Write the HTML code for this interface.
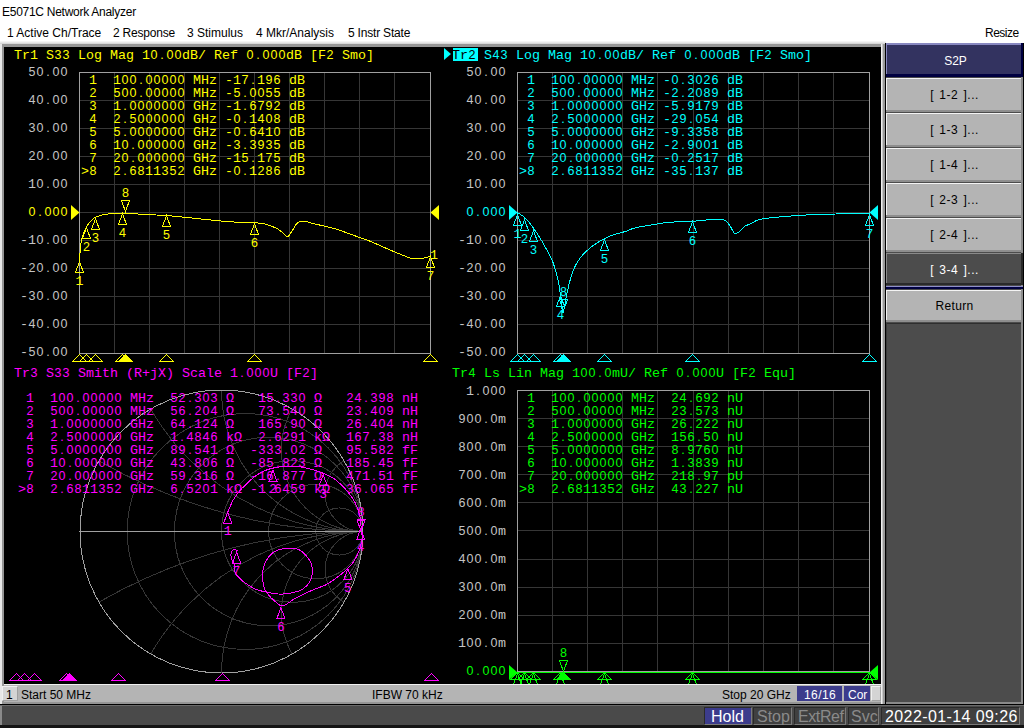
<!DOCTYPE html><html><head><meta charset="utf-8"><style>
*{margin:0;padding:0;box-sizing:border-box}
html,body{width:1024px;height:728px;overflow:hidden;background:#fff}
.m{position:absolute;font-family:"Liberation Mono",monospace;font-size:13.333px;line-height:13px;white-space:pre}
.m i{display:inline-block;width:8px;text-align:center;font-style:normal;font-family:"Liberation Sans",sans-serif;font-size:12.5px}
.s{position:absolute;font-family:"Liberation Sans",sans-serif;line-height:14px;white-space:pre}
.a{position:absolute}
</style></head><body>
<div class="s" style="left:2px;top:5px;color:#000;font-size:12px;letter-spacing:-0.27px">E5071C Network Analyzer</div>
<div class="s" style="left:7px;top:26px;color:#000;font-size:12px;letter-spacing:0px">1 Active Ch/Trace</div>
<div class="s" style="left:113px;top:26px;color:#000;font-size:12px;letter-spacing:-0.2px">2 Response</div>
<div class="s" style="left:187px;top:26px;color:#000;font-size:12px;letter-spacing:0px">3 Stimulus</div>
<div class="s" style="left:256px;top:26px;color:#000;font-size:12px;letter-spacing:0px">4 Mkr/Analysis</div>
<div class="s" style="left:348px;top:26px;color:#000;font-size:12px;letter-spacing:-0.2px">5 Instr State</div>
<div class="s" style="left:985px;top:26px;color:#000;font-size:12px;letter-spacing:-0.5px">Resize</div>
<div class="a" style="left:0;top:41px;width:886px;height:663px;background:#e8e8e8"></div>
<div class="a" style="left:0;top:41px;width:886px;height:1px;background:#f4f4f4"></div>
<div class="a" style="left:0;top:43px;width:886px;height:1px;background:#d8d8d8"></div>
<div class="a" style="left:2px;top:44px;width:884px;height:660px;background:#969696"></div>
<div class="a" style="left:4px;top:47px;width:877px;height:637px;background:#000"></div>
<div class="a" style="left:881px;top:44px;width:1px;height:660px;background:#f0f0f0"></div>
<div class="a" style="left:882px;top:44px;width:1px;height:660px;background:#c8c8c8"></div>
<div class="a" style="left:883px;top:44px;width:2px;height:660px;background:#9a9a9a"></div>
<svg class="a" style="left:0;top:0" width="1024" height="728" viewBox="0 0 1024 728"><defs><clipPath id="cl"><rect x="4" y="47" width="877" height="637"/></clipPath></defs><g clip-path="url(#cl)"><line x1="114.5" y1="72" x2="114.5" y2="353" stroke="#363636" shape-rendering="crispEdges"/><line x1="149.5" y1="72" x2="149.5" y2="353" stroke="#363636" shape-rendering="crispEdges"/><line x1="184.5" y1="72" x2="184.5" y2="353" stroke="#363636" shape-rendering="crispEdges"/><line x1="219.5" y1="72" x2="219.5" y2="353" stroke="#363636" shape-rendering="crispEdges"/><line x1="254.5" y1="72" x2="254.5" y2="353" stroke="#363636" shape-rendering="crispEdges"/><line x1="289.5" y1="72" x2="289.5" y2="353" stroke="#363636" shape-rendering="crispEdges"/><line x1="324.5" y1="72" x2="324.5" y2="353" stroke="#363636" shape-rendering="crispEdges"/><line x1="359.5" y1="72" x2="359.5" y2="353" stroke="#363636" shape-rendering="crispEdges"/><line x1="394.5" y1="72" x2="394.5" y2="353" stroke="#363636" shape-rendering="crispEdges"/><line x1="79" y1="100.5" x2="430" y2="100.5" stroke="#363636" shape-rendering="crispEdges"/><line x1="79" y1="128.5" x2="430" y2="128.5" stroke="#363636" shape-rendering="crispEdges"/><line x1="79" y1="156.5" x2="430" y2="156.5" stroke="#363636" shape-rendering="crispEdges"/><line x1="79" y1="184.5" x2="430" y2="184.5" stroke="#363636" shape-rendering="crispEdges"/><line x1="79" y1="212.5" x2="430" y2="212.5" stroke="#363636" shape-rendering="crispEdges"/><line x1="79" y1="240.5" x2="430" y2="240.5" stroke="#363636" shape-rendering="crispEdges"/><line x1="79" y1="268.5" x2="430" y2="268.5" stroke="#363636" shape-rendering="crispEdges"/><line x1="79" y1="296.5" x2="430" y2="296.5" stroke="#363636" shape-rendering="crispEdges"/><line x1="79" y1="324.5" x2="430" y2="324.5" stroke="#363636" shape-rendering="crispEdges"/><rect x="79.5" y="72.5" width="351" height="281" fill="none" stroke="#a0a0a0" shape-rendering="crispEdges"/><line x1="552.5" y1="72" x2="552.5" y2="353" stroke="#363636" shape-rendering="crispEdges"/><line x1="587.5" y1="72" x2="587.5" y2="353" stroke="#363636" shape-rendering="crispEdges"/><line x1="622.5" y1="72" x2="622.5" y2="353" stroke="#363636" shape-rendering="crispEdges"/><line x1="657.5" y1="72" x2="657.5" y2="353" stroke="#363636" shape-rendering="crispEdges"/><line x1="693.5" y1="72" x2="693.5" y2="353" stroke="#363636" shape-rendering="crispEdges"/><line x1="728.5" y1="72" x2="728.5" y2="353" stroke="#363636" shape-rendering="crispEdges"/><line x1="763.5" y1="72" x2="763.5" y2="353" stroke="#363636" shape-rendering="crispEdges"/><line x1="798.5" y1="72" x2="798.5" y2="353" stroke="#363636" shape-rendering="crispEdges"/><line x1="833.5" y1="72" x2="833.5" y2="353" stroke="#363636" shape-rendering="crispEdges"/><line x1="517" y1="100.5" x2="869" y2="100.5" stroke="#363636" shape-rendering="crispEdges"/><line x1="517" y1="128.5" x2="869" y2="128.5" stroke="#363636" shape-rendering="crispEdges"/><line x1="517" y1="156.5" x2="869" y2="156.5" stroke="#363636" shape-rendering="crispEdges"/><line x1="517" y1="184.5" x2="869" y2="184.5" stroke="#363636" shape-rendering="crispEdges"/><line x1="517" y1="212.5" x2="869" y2="212.5" stroke="#363636" shape-rendering="crispEdges"/><line x1="517" y1="240.5" x2="869" y2="240.5" stroke="#363636" shape-rendering="crispEdges"/><line x1="517" y1="268.5" x2="869" y2="268.5" stroke="#363636" shape-rendering="crispEdges"/><line x1="517" y1="296.5" x2="869" y2="296.5" stroke="#363636" shape-rendering="crispEdges"/><line x1="517" y1="324.5" x2="869" y2="324.5" stroke="#363636" shape-rendering="crispEdges"/><rect x="517.5" y="72.5" width="352" height="281" fill="none" stroke="#a0a0a0" shape-rendering="crispEdges"/><line x1="552.5" y1="390" x2="552.5" y2="671" stroke="#363636" shape-rendering="crispEdges"/><line x1="587.5" y1="390" x2="587.5" y2="671" stroke="#363636" shape-rendering="crispEdges"/><line x1="622.5" y1="390" x2="622.5" y2="671" stroke="#363636" shape-rendering="crispEdges"/><line x1="657.5" y1="390" x2="657.5" y2="671" stroke="#363636" shape-rendering="crispEdges"/><line x1="693.5" y1="390" x2="693.5" y2="671" stroke="#363636" shape-rendering="crispEdges"/><line x1="728.5" y1="390" x2="728.5" y2="671" stroke="#363636" shape-rendering="crispEdges"/><line x1="763.5" y1="390" x2="763.5" y2="671" stroke="#363636" shape-rendering="crispEdges"/><line x1="798.5" y1="390" x2="798.5" y2="671" stroke="#363636" shape-rendering="crispEdges"/><line x1="833.5" y1="390" x2="833.5" y2="671" stroke="#363636" shape-rendering="crispEdges"/><line x1="517" y1="418.5" x2="869" y2="418.5" stroke="#363636" shape-rendering="crispEdges"/><line x1="517" y1="446.5" x2="869" y2="446.5" stroke="#363636" shape-rendering="crispEdges"/><line x1="517" y1="474.5" x2="869" y2="474.5" stroke="#363636" shape-rendering="crispEdges"/><line x1="517" y1="502.5" x2="869" y2="502.5" stroke="#363636" shape-rendering="crispEdges"/><line x1="517" y1="530.5" x2="869" y2="530.5" stroke="#363636" shape-rendering="crispEdges"/><line x1="517" y1="559.5" x2="869" y2="559.5" stroke="#363636" shape-rendering="crispEdges"/><line x1="517" y1="587.5" x2="869" y2="587.5" stroke="#363636" shape-rendering="crispEdges"/><line x1="517" y1="615.5" x2="869" y2="615.5" stroke="#363636" shape-rendering="crispEdges"/><line x1="517" y1="643.5" x2="869" y2="643.5" stroke="#363636" shape-rendering="crispEdges"/><rect x="517.5" y="390.5" width="352" height="281" fill="none" stroke="#a0a0a0" shape-rendering="crispEdges"/><path d="M79.50,262.00 C79.67,259.50 80.07,251.10 80.50,247.00 C80.93,242.90 81.18,240.57 82.10,237.40 C83.02,234.23 84.62,230.67 86.00,228.00 C87.38,225.33 88.75,223.23 90.40,221.40 C92.05,219.57 93.33,218.18 95.90,217.00 C98.47,215.82 101.95,214.90 105.80,214.30 C109.65,213.70 114.13,213.55 119.00,213.40 C123.87,213.25 131.55,213.27 135.00,213.40 C138.45,213.53 135.17,213.88 139.70,214.20 C144.23,214.52 156.30,214.95 162.20,215.30 C168.10,215.65 169.73,215.80 175.10,216.30 C180.47,216.80 188.32,217.67 194.40,218.30 C200.48,218.93 204.62,219.45 211.60,220.10 C218.58,220.75 229.13,221.77 236.30,222.20 C243.47,222.63 250.44,222.50 254.60,222.70 C258.76,222.90 259.17,223.08 261.25,223.40 C263.33,223.72 264.49,223.75 267.10,224.60 C269.71,225.45 274.45,227.27 276.90,228.50 C279.35,229.73 280.10,230.65 281.80,232.00 C283.50,233.35 285.65,236.37 287.10,236.60 C288.55,236.83 288.95,235.50 290.50,233.40 C292.05,231.30 294.77,226.02 296.40,224.00 C298.03,221.98 298.67,221.70 300.30,221.30 C301.93,220.90 304.08,221.23 306.20,221.60 C308.32,221.97 310.07,222.77 313.00,223.50 C315.93,224.23 319.65,224.98 323.75,226.00 C327.85,227.02 331.59,227.67 337.60,229.60 C343.61,231.53 354.53,235.72 359.80,237.60 C365.07,239.48 363.72,238.65 369.20,240.90 C374.68,243.15 385.67,248.20 392.70,251.10 C399.73,254.00 406.52,257.10 411.40,258.30 C416.28,259.50 418.87,258.60 422.00,258.30 C425.13,258.00 428.83,256.80 430.20,256.50" fill="none" stroke="#ffff00" stroke-width="1" shape-rendering="crispEdges"/><path d="M517.50,212.50 C518.98,213.60 523.13,215.62 526.40,219.10 C529.67,222.58 533.82,228.48 537.10,233.40 C540.38,238.32 543.42,243.68 546.10,248.60 C548.78,253.52 551.12,257.25 553.20,262.90 C555.28,268.55 557.26,275.98 558.60,282.50 C559.94,289.02 560.52,296.93 561.25,302.00 C561.98,307.07 562.11,314.07 563.00,312.90 C563.89,311.73 565.27,300.98 566.60,295.00 C567.93,289.02 569.37,282.21 571.00,277.00 C572.63,271.79 574.00,267.90 576.40,263.75 C578.80,259.60 581.82,255.67 585.40,252.10 C588.98,248.53 593.45,245.12 597.90,242.30 C602.35,239.48 607.58,236.98 612.10,235.20 C616.62,233.42 621.15,232.82 625.00,231.60 C628.85,230.38 629.68,229.20 635.20,227.90 C640.72,226.60 652.17,224.75 658.10,223.80 C664.03,222.85 665.08,222.62 670.80,222.20 C676.52,221.78 685.42,221.77 692.40,221.30 C699.38,220.83 707.83,219.72 712.70,219.40 C717.57,219.08 719.28,219.05 721.60,219.40 C723.92,219.75 725.13,220.32 726.60,221.50 C728.07,222.68 729.12,224.55 730.40,226.50 C731.68,228.45 733.02,232.18 734.30,233.20 C735.58,234.22 736.42,233.72 738.10,232.60 C739.78,231.48 742.42,227.92 744.40,226.50 C746.38,225.08 747.03,225.35 750.00,224.10 C752.97,222.85 753.40,220.48 762.20,219.00 C771.00,217.52 790.53,216.03 802.80,215.20 C815.07,214.37 824.78,214.32 835.80,214.00 C846.82,213.68 863.38,213.42 868.90,213.30" fill="none" stroke="#00ffff" stroke-width="1" shape-rendering="crispEdges"/><path d="M79.5,261.5 L75.5,272.5 L83.5,272.5 Z" fill="none" stroke="#ffff00" stroke-width="1" shape-rendering="crispEdges"/><rect x="75.0" y="272.0" width="9" height="1" fill="#ffff00" shape-rendering="crispEdges"/><path d="M86.5,227.5 L82.5,238.5 L90.5,238.5 Z" fill="none" stroke="#ffff00" stroke-width="1" shape-rendering="crispEdges"/><rect x="82.0" y="238.0" width="9" height="1" fill="#ffff00" shape-rendering="crispEdges"/><path d="M95.5,218.5 L91.5,229.5 L99.5,229.5 Z" fill="none" stroke="#ffff00" stroke-width="1" shape-rendering="crispEdges"/><rect x="91.0" y="229.0" width="9" height="1" fill="#ffff00" shape-rendering="crispEdges"/><path d="M122.5,213.5 L118.5,224.5 L126.5,224.5 Z" fill="none" stroke="#ffff00" stroke-width="1" shape-rendering="crispEdges"/><rect x="118.0" y="224.0" width="9" height="1" fill="#ffff00" shape-rendering="crispEdges"/><path d="M166.5,215.5 L162.5,226.5 L170.5,226.5 Z" fill="none" stroke="#ffff00" stroke-width="1" shape-rendering="crispEdges"/><rect x="162.0" y="226.0" width="9" height="1" fill="#ffff00" shape-rendering="crispEdges"/><path d="M254.5,223.5 L250.5,234.5 L258.5,234.5 Z" fill="none" stroke="#ffff00" stroke-width="1" shape-rendering="crispEdges"/><rect x="250.0" y="234.0" width="9" height="1" fill="#ffff00" shape-rendering="crispEdges"/><path d="M430.5,256.5 L426.5,267.5 L434.5,267.5 Z" fill="none" stroke="#ffff00" stroke-width="1" shape-rendering="crispEdges"/><rect x="426.0" y="267.0" width="9" height="1" fill="#ffff00" shape-rendering="crispEdges"/><path d="M125.5,211.5 L121.5,200.5 L129.5,200.5 Z" fill="none" stroke="#ffff00" stroke-width="1" shape-rendering="crispEdges"/><rect x="121.0" y="199.5" width="9" height="1" fill="#ffff00" shape-rendering="crispEdges"/><path d="M517.5,214.5 L513.5,225.5 L521.5,225.5 Z" fill="none" stroke="#00ffff" stroke-width="1" shape-rendering="crispEdges"/><rect x="513.0" y="225.0" width="9" height="1" fill="#00ffff" shape-rendering="crispEdges"/><path d="M524.5,219.5 L520.5,230.5 L528.5,230.5 Z" fill="none" stroke="#00ffff" stroke-width="1" shape-rendering="crispEdges"/><rect x="520.0" y="230.0" width="9" height="1" fill="#00ffff" shape-rendering="crispEdges"/><path d="M533.5,230.5 L529.5,241.5 L537.5,241.5 Z" fill="none" stroke="#00ffff" stroke-width="1" shape-rendering="crispEdges"/><rect x="529.0" y="241.0" width="9" height="1" fill="#00ffff" shape-rendering="crispEdges"/><path d="M560.5,295.5 L556.5,306.5 L564.5,306.5 Z" fill="none" stroke="#00ffff" stroke-width="1" shape-rendering="crispEdges"/><rect x="556.0" y="306.0" width="9" height="1" fill="#00ffff" shape-rendering="crispEdges"/><path d="M604.5,239.5 L600.5,250.5 L608.5,250.5 Z" fill="none" stroke="#00ffff" stroke-width="1" shape-rendering="crispEdges"/><rect x="600.0" y="250.0" width="9" height="1" fill="#00ffff" shape-rendering="crispEdges"/><path d="M692.5,221.5 L688.5,232.5 L696.5,232.5 Z" fill="none" stroke="#00ffff" stroke-width="1" shape-rendering="crispEdges"/><rect x="688.0" y="232.0" width="9" height="1" fill="#00ffff" shape-rendering="crispEdges"/><path d="M869.5,214.5 L865.5,225.5 L873.5,225.5 Z" fill="none" stroke="#00ffff" stroke-width="1" shape-rendering="crispEdges"/><rect x="865.0" y="225.0" width="9" height="1" fill="#00ffff" shape-rendering="crispEdges"/><path d="M563.5,310.5 L559.5,299.5 L567.5,299.5 Z" fill="none" stroke="#00ffff" stroke-width="1" shape-rendering="crispEdges"/><rect x="559.0" y="298.5" width="9" height="1" fill="#00ffff" shape-rendering="crispEdges"/><path d="M79.5,354.5 L72.5,361.5 L86.5,361.5 Z" fill="none" stroke="#ffff00" stroke-width="1" shape-rendering="crispEdges"/><path d="M86.5,354.5 L79.5,361.5 L93.5,361.5 Z" fill="none" stroke="#ffff00" stroke-width="1" shape-rendering="crispEdges"/><path d="M95.5,354.5 L88.5,361.5 L102.5,361.5 Z" fill="none" stroke="#ffff00" stroke-width="1" shape-rendering="crispEdges"/><path d="M122.5,354.5 L115.5,361.5 L129.5,361.5 Z" fill="none" stroke="#ffff00" stroke-width="1" shape-rendering="crispEdges"/><path d="M166.5,354.5 L159.5,361.5 L173.5,361.5 Z" fill="none" stroke="#ffff00" stroke-width="1" shape-rendering="crispEdges"/><path d="M254.5,354.5 L247.5,361.5 L261.5,361.5 Z" fill="none" stroke="#ffff00" stroke-width="1" shape-rendering="crispEdges"/><path d="M430.5,354.5 L423.5,361.5 L437.5,361.5 Z" fill="none" stroke="#ffff00" stroke-width="1" shape-rendering="crispEdges"/><path d="M125.5,354.5 L118.5,361.5 L132.5,361.5 Z" fill="#ffff00" stroke="#ffff00" stroke-width="1" shape-rendering="crispEdges"/><path d="M517.5,354.5 L510.5,361.5 L524.5,361.5 Z" fill="none" stroke="#00ffff" stroke-width="1" shape-rendering="crispEdges"/><path d="M524.5,354.5 L517.5,361.5 L531.5,361.5 Z" fill="none" stroke="#00ffff" stroke-width="1" shape-rendering="crispEdges"/><path d="M533.5,354.5 L526.5,361.5 L540.5,361.5 Z" fill="none" stroke="#00ffff" stroke-width="1" shape-rendering="crispEdges"/><path d="M560.5,354.5 L553.5,361.5 L567.5,361.5 Z" fill="none" stroke="#00ffff" stroke-width="1" shape-rendering="crispEdges"/><path d="M604.5,354.5 L597.5,361.5 L611.5,361.5 Z" fill="none" stroke="#00ffff" stroke-width="1" shape-rendering="crispEdges"/><path d="M692.5,354.5 L685.5,361.5 L699.5,361.5 Z" fill="none" stroke="#00ffff" stroke-width="1" shape-rendering="crispEdges"/><path d="M869.5,354.5 L862.5,361.5 L876.5,361.5 Z" fill="none" stroke="#00ffff" stroke-width="1" shape-rendering="crispEdges"/><path d="M563.5,354.5 L556.5,361.5 L570.5,361.5 Z" fill="#00ffff" stroke="#00ffff" stroke-width="1" shape-rendering="crispEdges"/><path d="M16.5,673.5 L9.5,680.5 L23.5,680.5 Z" fill="none" stroke="#ff00ff" stroke-width="1" shape-rendering="crispEdges"/><path d="M24.5,673.5 L17.5,680.5 L31.5,680.5 Z" fill="none" stroke="#ff00ff" stroke-width="1" shape-rendering="crispEdges"/><path d="M34.5,673.5 L27.5,680.5 L41.5,680.5 Z" fill="none" stroke="#ff00ff" stroke-width="1" shape-rendering="crispEdges"/><path d="M66.5,673.5 L59.5,680.5 L73.5,680.5 Z" fill="none" stroke="#ff00ff" stroke-width="1" shape-rendering="crispEdges"/><path d="M118.5,673.5 L111.5,680.5 L125.5,680.5 Z" fill="none" stroke="#ff00ff" stroke-width="1" shape-rendering="crispEdges"/><path d="M222.5,673.5 L215.5,680.5 L229.5,680.5 Z" fill="none" stroke="#ff00ff" stroke-width="1" shape-rendering="crispEdges"/><path d="M431.5,673.5 L424.5,680.5 L438.5,680.5 Z" fill="none" stroke="#ff00ff" stroke-width="1" shape-rendering="crispEdges"/><path d="M69.5,673.5 L62.5,680.5 L76.5,680.5 Z" fill="#ff00ff" stroke="#ff00ff" stroke-width="1" shape-rendering="crispEdges"/><path d="M517.5,672.5 L510.5,679.5 L524.5,679.5 Z" fill="none" stroke="#00ff00" stroke-width="1" shape-rendering="crispEdges"/><path d="M524.5,672.5 L517.5,679.5 L531.5,679.5 Z" fill="none" stroke="#00ff00" stroke-width="1" shape-rendering="crispEdges"/><path d="M533.5,672.5 L526.5,679.5 L540.5,679.5 Z" fill="none" stroke="#00ff00" stroke-width="1" shape-rendering="crispEdges"/><path d="M560.5,672.5 L553.5,679.5 L567.5,679.5 Z" fill="none" stroke="#00ff00" stroke-width="1" shape-rendering="crispEdges"/><path d="M604.5,672.5 L597.5,679.5 L611.5,679.5 Z" fill="none" stroke="#00ff00" stroke-width="1" shape-rendering="crispEdges"/><path d="M692.5,672.5 L685.5,679.5 L699.5,679.5 Z" fill="none" stroke="#00ff00" stroke-width="1" shape-rendering="crispEdges"/><path d="M869.5,672.5 L862.5,679.5 L876.5,679.5 Z" fill="none" stroke="#00ff00" stroke-width="1" shape-rendering="crispEdges"/><path d="M563.5,672.5 L556.5,679.5 L570.5,679.5 Z" fill="#00ff00" stroke="#00ff00" stroke-width="1" shape-rendering="crispEdges"/><path d="M79.5,212.5 L71.0,205.0 L71.0,220.0 Z" fill="#ffff00"/><path d="M430.5,212.5 L439.0,205.0 L439.0,220.0 Z" fill="#ffff00"/><path d="M517.5,212.5 L509.0,205.0 L509.0,220.0 Z" fill="#00ffff"/><path d="M869.5,212.5 L878.0,205.0 L878.0,220.0 Z" fill="#00ffff"/><path d="M517.5,672.5 L509.0,665.0 L509.0,680.0 Z" fill="#00ff00"/><path d="M869.5,672.5 L878.0,665.0 L878.0,680.0 Z" fill="#00ff00"/><line x1="517" y1="672.5" x2="869" y2="672.5" stroke="#00ff00" stroke-width="1" shape-rendering="crispEdges"/><path d="M517.5,673.5 L513.5,684.5 L521.5,684.5 Z" fill="none" stroke="#00ff00" stroke-width="1" shape-rendering="crispEdges"/><rect x="513.0" y="684.0" width="9" height="1" fill="#00ff00" shape-rendering="crispEdges"/><path d="M524.5,673.5 L520.5,684.5 L528.5,684.5 Z" fill="none" stroke="#00ff00" stroke-width="1" shape-rendering="crispEdges"/><rect x="520.0" y="684.0" width="9" height="1" fill="#00ff00" shape-rendering="crispEdges"/><path d="M533.5,673.5 L529.5,684.5 L537.5,684.5 Z" fill="none" stroke="#00ff00" stroke-width="1" shape-rendering="crispEdges"/><rect x="529.0" y="684.0" width="9" height="1" fill="#00ff00" shape-rendering="crispEdges"/><path d="M560.5,673.5 L556.5,684.5 L564.5,684.5 Z" fill="none" stroke="#00ff00" stroke-width="1" shape-rendering="crispEdges"/><rect x="556.0" y="684.0" width="9" height="1" fill="#00ff00" shape-rendering="crispEdges"/><path d="M604.5,673.5 L600.5,684.5 L608.5,684.5 Z" fill="none" stroke="#00ff00" stroke-width="1" shape-rendering="crispEdges"/><rect x="600.0" y="684.0" width="9" height="1" fill="#00ff00" shape-rendering="crispEdges"/><path d="M692.5,673.5 L688.5,684.5 L696.5,684.5 Z" fill="none" stroke="#00ff00" stroke-width="1" shape-rendering="crispEdges"/><rect x="688.0" y="684.0" width="9" height="1" fill="#00ff00" shape-rendering="crispEdges"/><path d="M869.5,673.5 L865.5,684.5 L873.5,684.5 Z" fill="none" stroke="#00ff00" stroke-width="1" shape-rendering="crispEdges"/><rect x="865.0" y="684.0" width="9" height="1" fill="#00ff00" shape-rendering="crispEdges"/><path d="M563.5,671.5 L559.5,660.5 L567.5,660.5 Z" fill="none" stroke="#00ff00" stroke-width="1" shape-rendering="crispEdges"/><rect x="559.0" y="659.5" width="9" height="1" fill="#00ff00" shape-rendering="crispEdges"/><clipPath id="sc"><circle cx="221.5" cy="531.5" r="141.5"/></clipPath><g clip-path="url(#sc)" fill="none" stroke="#363636" stroke-width="1" shape-rendering="crispEdges"><circle cx="245.08" cy="531.5" r="117.92"/><circle cx="268.67" cy="531.5" r="94.33"/><circle cx="292.25" cy="531.5" r="70.75"/><circle cx="315.83" cy="531.5" r="47.17"/><circle cx="339.42" cy="531.5" r="23.58"/><circle cx="363.00" cy="3.41" r="528.09"/><circle cx="363.00" cy="1059.59" r="528.09"/><circle cx="363.00" cy="286.41" r="245.09"/><circle cx="363.00" cy="776.59" r="245.09"/><circle cx="363.00" cy="390.00" r="141.50"/><circle cx="363.00" cy="673.00" r="141.50"/><circle cx="363.00" cy="449.80" r="81.70"/><circle cx="363.00" cy="613.20" r="81.70"/><circle cx="363.00" cy="493.59" r="37.91"/><circle cx="363.00" cy="569.41" r="37.91"/></g><circle cx="221.5" cy="531.5" r="141.5" fill="none" stroke="#a0a0a0" shape-rendering="crispEdges"/><line x1="80.0" y1="531.5" x2="363.0" y2="531.5" stroke="#a0a0a0" shape-rendering="crispEdges"/><path d="M228.00,511.80 C228.87,509.83 230.87,503.92 233.20,500.00 C235.53,496.08 238.10,492.43 242.00,488.30 C245.90,484.17 252.22,478.37 256.60,475.20 C260.98,472.03 263.67,470.77 268.30,469.30 C272.93,467.83 278.78,466.77 284.40,466.40 C290.02,466.03 295.65,466.00 302.00,467.10 C308.35,468.20 316.63,470.68 322.50,473.00 C328.37,475.32 332.32,476.98 337.20,481.00 C342.08,485.02 348.13,491.73 351.80,497.10 C355.47,502.47 357.58,507.55 359.20,513.20 C360.82,518.85 361.03,526.70 361.50,531.00 C361.97,535.30 362.42,535.65 362.00,539.00 C361.58,542.35 360.50,547.18 359.00,551.10 C357.50,555.02 355.02,559.47 353.00,562.50 C350.98,565.53 349.93,566.53 346.90,569.30 C343.87,572.07 338.33,576.50 334.80,579.10 C331.27,581.70 329.40,583.07 325.70,584.90 C322.00,586.73 317.55,587.93 312.60,590.10 C307.65,592.27 300.98,595.27 296.00,597.90 C291.02,600.53 286.30,605.42 282.70,605.90 C279.10,606.38 276.80,602.68 274.40,600.80 C272.00,598.92 270.02,596.83 268.30,594.60 C266.58,592.37 265.05,591.00 264.10,587.40 C263.15,583.80 262.42,577.12 262.60,573.00 C262.78,568.88 263.40,566.13 265.20,562.70 C267.00,559.27 269.80,554.82 273.40,552.40 C277.00,549.98 282.50,548.63 286.80,548.20 C291.10,547.77 295.60,548.08 299.20,549.80 C302.80,551.52 306.22,555.50 308.40,558.50 C310.58,561.50 311.95,564.18 312.30,567.80 C312.65,571.42 312.18,576.60 310.50,580.20 C308.82,583.80 305.47,587.27 302.20,589.40 C298.93,591.53 294.67,592.22 290.90,593.00 C287.13,593.78 283.72,594.27 279.60,594.10 C275.48,593.93 270.15,592.78 266.20,592.00 C262.25,591.22 259.33,590.85 255.90,589.40 C252.47,587.95 248.35,585.18 245.60,583.30 C242.85,581.42 241.12,579.82 239.40,578.10 C237.68,576.38 236.12,575.07 235.30,573.00 C234.48,570.93 235.18,568.28 234.50,565.70 C233.82,563.12 231.67,559.90 231.20,557.50 C230.73,555.10 231.10,552.67 231.70,551.30 C232.30,549.93 233.85,549.38 234.80,549.30 C235.75,549.22 236.97,550.55 237.40,550.80" fill="none" stroke="#ff00ff" stroke-width="1" shape-rendering="crispEdges"/><path d="M227.7,512.2 L223.7,523.2 L231.7,523.2 Z" fill="none" stroke="#ff00ff" stroke-width="1" shape-rendering="crispEdges"/><rect x="223.2" y="522.7" width="9" height="1" fill="#ff00ff" shape-rendering="crispEdges"/><path d="M272.9,470.1 L268.9,481.1 L276.9,481.1 Z" fill="none" stroke="#ff00ff" stroke-width="1" shape-rendering="crispEdges"/><rect x="268.4" y="480.6" width="9" height="1" fill="#ff00ff" shape-rendering="crispEdges"/><path d="M323.2,474.6 L319.2,485.6 L327.2,485.6 Z" fill="none" stroke="#ff00ff" stroke-width="1" shape-rendering="crispEdges"/><rect x="318.7" y="485.1" width="9" height="1" fill="#ff00ff" shape-rendering="crispEdges"/><path d="M360.7,528.5 L356.7,539.5 L364.7,539.5 Z" fill="none" stroke="#ff00ff" stroke-width="1" shape-rendering="crispEdges"/><rect x="356.2" y="539.0" width="9" height="1" fill="#ff00ff" shape-rendering="crispEdges"/><path d="M347.9,568.6 L343.9,579.6 L351.9,579.6 Z" fill="none" stroke="#ff00ff" stroke-width="1" shape-rendering="crispEdges"/><rect x="343.4" y="579.1" width="9" height="1" fill="#ff00ff" shape-rendering="crispEdges"/><path d="M280.9,607.6 L276.9,618.6 L284.9,618.6 Z" fill="none" stroke="#ff00ff" stroke-width="1" shape-rendering="crispEdges"/><rect x="276.4" y="618.1" width="9" height="1" fill="#ff00ff" shape-rendering="crispEdges"/><path d="M236.6,552.0 L232.6,563.0 L240.6,563.0 Z" fill="none" stroke="#ff00ff" stroke-width="1" shape-rendering="crispEdges"/><rect x="232.1" y="562.5" width="9" height="1" fill="#ff00ff" shape-rendering="crispEdges"/><path d="M361.0,531.0 L357.0,520.0 L365.0,520.0 Z" fill="none" stroke="#ff00ff" stroke-width="1" shape-rendering="crispEdges"/><rect x="356.5" y="519.0" width="9" height="1" fill="#ff00ff" shape-rendering="crispEdges"/></g></svg>
<div class="m" style="left:75.5px;top:274.5px;color:#ffff00">1</div>
<div class="m" style="left:82.5px;top:240.5px;color:#ffff00"><i>2</i></div>
<div class="m" style="left:91.5px;top:231.5px;color:#ffff00"><i>3</i></div>
<div class="m" style="left:118.5px;top:226.5px;color:#ffff00"><i>4</i></div>
<div class="m" style="left:162.5px;top:228.5px;color:#ffff00"><i>5</i></div>
<div class="m" style="left:250.5px;top:236.5px;color:#ffff00"><i>6</i></div>
<div class="m" style="left:426.5px;top:269.5px;color:#ffff00"><i>7</i></div>
<div class="m" style="left:121.5px;top:186.5px;color:#ffff00"><i>8</i></div>
<div class="m" style="left:513.5px;top:227.5px;color:#00ffff">1</div>
<div class="m" style="left:520.5px;top:232.5px;color:#00ffff"><i>2</i></div>
<div class="m" style="left:529.5px;top:243.5px;color:#00ffff"><i>3</i></div>
<div class="m" style="left:556.5px;top:308.5px;color:#00ffff"><i>4</i></div>
<div class="m" style="left:600.5px;top:252.5px;color:#00ffff"><i>5</i></div>
<div class="m" style="left:688.5px;top:234.5px;color:#00ffff"><i>6</i></div>
<div class="m" style="left:865.5px;top:227.5px;color:#00ffff"><i>7</i></div>
<div class="m" style="left:559.5px;top:285.5px;color:#00ffff"><i>8</i></div>
<div class="m" style="left:513.5px;top:686.5px;color:#00ff00">1</div>
<div class="m" style="left:520.5px;top:686.5px;color:#00ff00"><i>2</i></div>
<div class="m" style="left:529.5px;top:686.5px;color:#00ff00"><i>3</i></div>
<div class="m" style="left:556.5px;top:686.5px;color:#00ff00"><i>4</i></div>
<div class="m" style="left:600.5px;top:686.5px;color:#00ff00"><i>5</i></div>
<div class="m" style="left:688.5px;top:686.5px;color:#00ff00"><i>6</i></div>
<div class="m" style="left:865.5px;top:686.5px;color:#00ff00"><i>7</i></div>
<div class="m" style="left:559.5px;top:646.5px;color:#00ff00"><i>8</i></div>
<div class="m" style="left:223.7229923871347px;top:525.2288786574663px;color:#ff00ff">1</div>
<div class="m" style="left:268.94494712226003px;top:483.1421924915352px;color:#ff00ff"><i>2</i></div>
<div class="m" style="left:319.1733612390257px;top:487.60473370679586px;color:#ff00ff"><i>3</i></div>
<div class="m" style="left:356.65682466930605px;top:541.4856364773051px;color:#ff00ff"><i>4</i></div>
<div class="m" style="left:343.85507093301544px;top:581.6439596812921px;color:#ff00ff"><i>5</i></div>
<div class="m" style="left:276.88788495389286px;top:620.6242782935212px;color:#ff00ff"><i>6</i></div>
<div class="m" style="left:232.57220821649807px;top:565.0188430049595px;color:#ff00ff"><i>7</i></div>
<div class="m" style="left:356.97348211368546px;top:506.00767047519594px;color:#ff00ff"><i>8</i></div>
<div class="m" style="left:430px;top:249px;color:#ffff00;">1</div>
<div class="m" style="left:14px;top:49px;color:#ffff00;">Tr1 S<i>3</i><i>3</i> Log Mag 1<i>0</i><i>.</i><i>0</i><i>0</i>dB/ Ref <i>0</i><i>.</i><i>0</i><i>0</i><i>0</i>dB [F<i>2</i> Smo]</div>
<div class="a" style="left:444px;top:48px;width:0;height:0;border-top:6.5px solid transparent;border-bottom:6.5px solid transparent;border-left:7px solid #00ffff"></div>
<div class="a" style="left:453px;top:48px;width:25px;height:13px;background:#00ffff"></div>
<div class="m" style="left:452px;top:49px;color:#000;">Tr<i>2</i></div>
<div class="m" style="left:476px;top:49px;color:#00ffff;"> S<i>4</i><i>3</i> Log Mag 1<i>0</i><i>.</i><i>0</i><i>0</i>dB/ Ref <i>0</i><i>.</i><i>0</i><i>0</i><i>0</i>dB [F<i>2</i> Smo]</div>
<div class="m" style="left:14px;top:367px;color:#ff00ff;">Tr<i>3</i> S<i>3</i><i>3</i> Smith (R+jX) Scale 1<i>.</i><i>0</i><i>0</i><i>0</i>U [F<i>2</i>]</div>
<div class="m" style="left:452px;top:367px;color:#00ff00;">Tr<i>4</i> Ls Lin Mag 1<i>0</i><i>0</i><i>.</i><i>0</i>mU/ Ref <i>0</i><i>.</i><i>0</i><i>0</i><i>0</i>U [F<i>2</i> Equ]</div>
<div class="m" style="left:28px;top:66px;color:#c4c4c4"><i>5</i><i>0</i><i>.</i><i>0</i><i>0</i></div>
<div class="m" style="left:28px;top:94px;color:#c4c4c4"><i>4</i><i>0</i><i>.</i><i>0</i><i>0</i></div>
<div class="m" style="left:28px;top:122px;color:#c4c4c4"><i>3</i><i>0</i><i>.</i><i>0</i><i>0</i></div>
<div class="m" style="left:28px;top:150px;color:#c4c4c4"><i>2</i><i>0</i><i>.</i><i>0</i><i>0</i></div>
<div class="m" style="left:28px;top:178px;color:#c4c4c4">1<i>0</i><i>.</i><i>0</i><i>0</i></div>
<div class="m" style="left:28px;top:206px;color:#ffff00"><i>0</i><i>.</i><i>0</i><i>0</i><i>0</i></div>
<div class="m" style="left:20px;top:234px;color:#c4c4c4">-1<i>0</i><i>.</i><i>0</i><i>0</i></div>
<div class="m" style="left:20px;top:262px;color:#c4c4c4">-<i>2</i><i>0</i><i>.</i><i>0</i><i>0</i></div>
<div class="m" style="left:20px;top:290px;color:#c4c4c4">-<i>3</i><i>0</i><i>.</i><i>0</i><i>0</i></div>
<div class="m" style="left:20px;top:318px;color:#c4c4c4">-<i>4</i><i>0</i><i>.</i><i>0</i><i>0</i></div>
<div class="m" style="left:20px;top:346px;color:#c4c4c4">-<i>5</i><i>0</i><i>.</i><i>0</i><i>0</i></div>
<div class="m" style="left:466px;top:66px;color:#c4c4c4"><i>5</i><i>0</i><i>.</i><i>0</i><i>0</i></div>
<div class="m" style="left:466px;top:94px;color:#c4c4c4"><i>4</i><i>0</i><i>.</i><i>0</i><i>0</i></div>
<div class="m" style="left:466px;top:122px;color:#c4c4c4"><i>3</i><i>0</i><i>.</i><i>0</i><i>0</i></div>
<div class="m" style="left:466px;top:150px;color:#c4c4c4"><i>2</i><i>0</i><i>.</i><i>0</i><i>0</i></div>
<div class="m" style="left:466px;top:178px;color:#c4c4c4">1<i>0</i><i>.</i><i>0</i><i>0</i></div>
<div class="m" style="left:466px;top:206px;color:#00ffff"><i>0</i><i>.</i><i>0</i><i>0</i><i>0</i></div>
<div class="m" style="left:458px;top:234px;color:#c4c4c4">-1<i>0</i><i>.</i><i>0</i><i>0</i></div>
<div class="m" style="left:458px;top:262px;color:#c4c4c4">-<i>2</i><i>0</i><i>.</i><i>0</i><i>0</i></div>
<div class="m" style="left:458px;top:290px;color:#c4c4c4">-<i>3</i><i>0</i><i>.</i><i>0</i><i>0</i></div>
<div class="m" style="left:458px;top:318px;color:#c4c4c4">-<i>4</i><i>0</i><i>.</i><i>0</i><i>0</i></div>
<div class="m" style="left:458px;top:346px;color:#c4c4c4">-<i>5</i><i>0</i><i>.</i><i>0</i><i>0</i></div>
<div class="m" style="left:466px;top:385px;color:#c4c4c4">1<i>.</i><i>0</i><i>0</i><i>0</i></div>
<div class="m" style="left:458px;top:413px;color:#c4c4c4"><i>9</i><i>0</i><i>0</i><i>.</i><i>0</i>m</div>
<div class="m" style="left:458px;top:441px;color:#c4c4c4"><i>8</i><i>0</i><i>0</i><i>.</i><i>0</i>m</div>
<div class="m" style="left:458px;top:469px;color:#c4c4c4"><i>7</i><i>0</i><i>0</i><i>.</i><i>0</i>m</div>
<div class="m" style="left:458px;top:497px;color:#c4c4c4"><i>6</i><i>0</i><i>0</i><i>.</i><i>0</i>m</div>
<div class="m" style="left:458px;top:525px;color:#c4c4c4"><i>5</i><i>0</i><i>0</i><i>.</i><i>0</i>m</div>
<div class="m" style="left:458px;top:553px;color:#c4c4c4"><i>4</i><i>0</i><i>0</i><i>.</i><i>0</i>m</div>
<div class="m" style="left:458px;top:581px;color:#c4c4c4"><i>3</i><i>0</i><i>0</i><i>.</i><i>0</i>m</div>
<div class="m" style="left:458px;top:609px;color:#c4c4c4"><i>2</i><i>0</i><i>0</i><i>.</i><i>0</i>m</div>
<div class="m" style="left:458px;top:637px;color:#c4c4c4">1<i>0</i><i>0</i><i>.</i><i>0</i>m</div>
<div class="m" style="left:466px;top:665px;color:#00ff00"><i>0</i><i>.</i><i>0</i><i>0</i><i>0</i></div>
<div class="m" style="left:81px;top:74px;color:#ffff00"> 1  1<i>0</i><i>0</i><i>.</i><i>0</i><i>0</i><i>0</i><i>0</i><i>0</i> MHz -1<i>7</i><i>.</i>1<i>9</i><i>6</i> dB
 <i>2</i>  <i>5</i><i>0</i><i>0</i><i>.</i><i>0</i><i>0</i><i>0</i><i>0</i><i>0</i> MHz -<i>5</i><i>.</i><i>0</i><i>0</i><i>5</i><i>5</i> dB
 <i>3</i>  1<i>.</i><i>0</i><i>0</i><i>0</i><i>0</i><i>0</i><i>0</i><i>0</i> GHz -1<i>.</i><i>6</i><i>7</i><i>9</i><i>2</i> dB
 <i>4</i>  <i>2</i><i>.</i><i>5</i><i>0</i><i>0</i><i>0</i><i>0</i><i>0</i><i>0</i> GHz -<i>0</i><i>.</i>1<i>4</i><i>0</i><i>8</i> dB
 <i>5</i>  <i>5</i><i>.</i><i>0</i><i>0</i><i>0</i><i>0</i><i>0</i><i>0</i><i>0</i> GHz -<i>0</i><i>.</i><i>6</i><i>4</i>1<i>0</i> dB
 <i>6</i>  1<i>0</i><i>.</i><i>0</i><i>0</i><i>0</i><i>0</i><i>0</i><i>0</i> GHz -<i>3</i><i>.</i><i>3</i><i>9</i><i>3</i><i>5</i> dB
 <i>7</i>  <i>2</i><i>0</i><i>.</i><i>0</i><i>0</i><i>0</i><i>0</i><i>0</i><i>0</i> GHz -1<i>5</i><i>.</i>1<i>7</i><i>5</i> dB
&gt;<i>8</i>  <i>2</i><i>.</i><i>6</i><i>8</i>11<i>3</i><i>5</i><i>2</i> GHz -<i>0</i><i>.</i>1<i>2</i><i>8</i><i>6</i> dB</div>
<div class="m" style="left:519px;top:74px;color:#00ffff"> 1  1<i>0</i><i>0</i><i>.</i><i>0</i><i>0</i><i>0</i><i>0</i><i>0</i> MHz -<i>0</i><i>.</i><i>3</i><i>0</i><i>2</i><i>6</i> dB
 <i>2</i>  <i>5</i><i>0</i><i>0</i><i>.</i><i>0</i><i>0</i><i>0</i><i>0</i><i>0</i> MHz -<i>2</i><i>.</i><i>2</i><i>0</i><i>8</i><i>9</i> dB
 <i>3</i>  1<i>.</i><i>0</i><i>0</i><i>0</i><i>0</i><i>0</i><i>0</i><i>0</i> GHz -<i>5</i><i>.</i><i>9</i>1<i>7</i><i>9</i> dB
 <i>4</i>  <i>2</i><i>.</i><i>5</i><i>0</i><i>0</i><i>0</i><i>0</i><i>0</i><i>0</i> GHz -<i>2</i><i>9</i><i>.</i><i>0</i><i>5</i><i>4</i> dB
 <i>5</i>  <i>5</i><i>.</i><i>0</i><i>0</i><i>0</i><i>0</i><i>0</i><i>0</i><i>0</i> GHz -<i>9</i><i>.</i><i>3</i><i>3</i><i>5</i><i>8</i> dB
 <i>6</i>  1<i>0</i><i>.</i><i>0</i><i>0</i><i>0</i><i>0</i><i>0</i><i>0</i> GHz -<i>2</i><i>.</i><i>9</i><i>0</i><i>0</i>1 dB
 <i>7</i>  <i>2</i><i>0</i><i>.</i><i>0</i><i>0</i><i>0</i><i>0</i><i>0</i><i>0</i> GHz -<i>0</i><i>.</i><i>2</i><i>5</i>1<i>7</i> dB
&gt;<i>8</i>  <i>2</i><i>.</i><i>6</i><i>8</i>11<i>3</i><i>5</i><i>2</i> GHz -<i>3</i><i>5</i><i>.</i>1<i>3</i><i>7</i> dB</div>
<div class="m" style="left:18px;top:392px;color:#ff00ff"> 1  1<i>0</i><i>0</i><i>.</i><i>0</i><i>0</i><i>0</i><i>0</i><i>0</i> MHz  <i>5</i><i>2</i><i>.</i><i>3</i><i>0</i><i>3</i> Ω   1<i>5</i><i>.</i><i>3</i><i>3</i><i>0</i> Ω   <i>2</i><i>4</i><i>.</i><i>3</i><i>9</i><i>8</i> nH
 <i>2</i>  <i>5</i><i>0</i><i>0</i><i>.</i><i>0</i><i>0</i><i>0</i><i>0</i><i>0</i> MHz  <i>5</i><i>6</i><i>.</i><i>2</i><i>0</i><i>4</i> Ω   <i>7</i><i>3</i><i>.</i><i>5</i><i>4</i><i>0</i> Ω   <i>2</i><i>3</i><i>.</i><i>4</i><i>0</i><i>9</i> nH
 <i>3</i>  1<i>.</i><i>0</i><i>0</i><i>0</i><i>0</i><i>0</i><i>0</i><i>0</i> GHz  <i>6</i><i>4</i><i>.</i>1<i>2</i><i>4</i> Ω   1<i>6</i><i>5</i><i>.</i><i>9</i><i>0</i> Ω   <i>2</i><i>6</i><i>.</i><i>4</i><i>0</i><i>4</i> nH
 <i>4</i>  <i>2</i><i>.</i><i>5</i><i>0</i><i>0</i><i>0</i><i>0</i><i>0</i><i>0</i> GHz  1<i>.</i><i>4</i><i>8</i><i>4</i><i>6</i> kΩ  <i>2</i><i>.</i><i>6</i><i>2</i><i>9</i>1 kΩ  1<i>6</i><i>7</i><i>.</i><i>3</i><i>8</i> nH
 <i>5</i>  <i>5</i><i>.</i><i>0</i><i>0</i><i>0</i><i>0</i><i>0</i><i>0</i><i>0</i> GHz  <i>8</i><i>9</i><i>.</i><i>5</i><i>4</i>1 Ω  -<i>3</i><i>3</i><i>3</i><i>.</i><i>0</i><i>2</i> Ω   <i>9</i><i>5</i><i>.</i><i>5</i><i>8</i><i>2</i> fF
 <i>6</i>  1<i>0</i><i>.</i><i>0</i><i>0</i><i>0</i><i>0</i><i>0</i><i>0</i> GHz  <i>4</i><i>3</i><i>.</i><i>8</i><i>0</i><i>6</i> Ω  -<i>8</i><i>5</i><i>.</i><i>8</i><i>2</i><i>3</i> Ω   1<i>8</i><i>5</i><i>.</i><i>4</i><i>5</i> fF
 <i>7</i>  <i>2</i><i>0</i><i>.</i><i>0</i><i>0</i><i>0</i><i>0</i><i>0</i><i>0</i> GHz  <i>5</i><i>9</i><i>.</i><i>3</i>1<i>6</i> Ω  -1<i>6</i><i>.</i><i>8</i><i>7</i><i>7</i> Ω   <i>4</i><i>7</i>1<i>.</i><i>5</i>1 fF
&gt;<i>8</i>  <i>2</i><i>.</i><i>6</i><i>8</i>11<i>3</i><i>5</i><i>2</i> GHz  <i>6</i><i>.</i><i>5</i><i>2</i><i>0</i>1 kΩ -1<i>.</i><i>6</i><i>4</i><i>5</i><i>9</i> kΩ  <i>3</i><i>6</i><i>.</i><i>0</i><i>6</i><i>5</i> fF</div>
<div class="m" style="left:519px;top:392px;color:#00ff00"> 1  1<i>0</i><i>0</i><i>.</i><i>0</i><i>0</i><i>0</i><i>0</i><i>0</i> MHz  <i>2</i><i>4</i><i>.</i><i>6</i><i>9</i><i>2</i> nU
 <i>2</i>  <i>5</i><i>0</i><i>0</i><i>.</i><i>0</i><i>0</i><i>0</i><i>0</i><i>0</i> MHz  <i>2</i><i>3</i><i>.</i><i>5</i><i>7</i><i>3</i> nU
 <i>3</i>  1<i>.</i><i>0</i><i>0</i><i>0</i><i>0</i><i>0</i><i>0</i><i>0</i> GHz  <i>2</i><i>6</i><i>.</i><i>2</i><i>2</i><i>2</i> nU
 <i>4</i>  <i>2</i><i>.</i><i>5</i><i>0</i><i>0</i><i>0</i><i>0</i><i>0</i><i>0</i> GHz  1<i>5</i><i>6</i><i>.</i><i>5</i><i>0</i> nU
 <i>5</i>  <i>5</i><i>.</i><i>0</i><i>0</i><i>0</i><i>0</i><i>0</i><i>0</i><i>0</i> GHz  <i>8</i><i>.</i><i>9</i><i>7</i><i>6</i><i>0</i> nU
 <i>6</i>  1<i>0</i><i>.</i><i>0</i><i>0</i><i>0</i><i>0</i><i>0</i><i>0</i> GHz  1<i>.</i><i>3</i><i>8</i><i>3</i><i>9</i> nU
 <i>7</i>  <i>2</i><i>0</i><i>.</i><i>0</i><i>0</i><i>0</i><i>0</i><i>0</i><i>0</i> GHz  <i>2</i>1<i>8</i><i>.</i><i>9</i><i>7</i> pU
&gt;<i>8</i>  <i>2</i><i>.</i><i>6</i><i>8</i>11<i>3</i><i>5</i><i>2</i> GHz  <i>4</i><i>3</i><i>.</i><i>2</i><i>2</i><i>7</i> nU</div>
<div class="a" style="left:4px;top:684px;width:877px;height:20px;background:#b4b4b4;border-top:1px solid #f0f0f0;border-bottom:2px solid #959595"></div>
<div class="a" style="left:2px;top:686px;width:16px;height:15px;background:#d4d4d4;border:1px solid #f0f0f0;border-right-color:#a0a0a0;border-bottom-color:#a0a0a0"></div>
<div class="s" style="left:6px;top:688px;color:#000;font-size:12px;">1</div>
<div class="s" style="left:21px;top:688px;color:#000;font-size:12px;">Start 50 MHz</div>
<div class="s" style="left:372px;top:688px;color:#000;font-size:12px;">IFBW 70 kHz</div>
<div class="s" style="left:722px;top:688px;color:#000;font-size:12px;">Stop 20 GHz</div>
<div class="a" style="left:797px;top:686px;width:45px;height:15px;background:#3c3c8c"></div>
<div class="s" style="left:804px;top:688px;color:#fff;font-size:12px;letter-spacing:0.4px">16/16</div>
<div class="a" style="left:844px;top:686px;width:26px;height:15px;background:#3c3c8c"></div>
<div class="s" style="left:848px;top:688px;color:#fff;font-size:12px;">Cor</div>
<div class="a" style="left:871px;top:686px;width:10px;height:15px;background:#d4d4d4;border:1px solid #f0f0f0;border-right-color:#a0a0a0;border-bottom-color:#a0a0a0"></div>
<div class="a" style="left:885px;top:43px;width:139px;height:662px;background:#000"></div>
<div class="a" style="left:886px;top:43px;width:135px;height:659px;background:#4c4c4c"></div>
<div class="a" style="left:886px;top:323px;width:135px;height:1px;background:#2e2e2e"></div>
<div class="a" style="left:886px;top:323px;width:1px;height:379px;background:#3a3a3a"></div>
<div class="a" style="left:1021px;top:43px;width:2px;height:661px;background:#8a8a8a"></div>
<div class="a" style="left:886px;top:702px;width:137px;height:2px;background:#8a8a8a"></div>
<div class="a" style="left:886px;top:43px;width:137px;height:34px;background:#333360"></div>
<div class="a" style="left:886px;top:43px;width:137px;height:2px;background:#8888c0"></div>
<div class="a" style="left:886px;top:43px;width:1px;height:34px;background:#8888c0"></div>
<div class="a" style="left:886px;top:74px;width:137px;height:3px;background:#000040"></div>
<div class="a" style="left:1021px;top:43px;width:2px;height:34px;background:#000040"></div>
<div class="s" style="left:888px;top:54px;width:135px;text-align:center;color:#fff;font-size:12px;">S2P</div>
<div class="a" style="left:886px;top:78px;width:137px;height:34px;background:#b4b4b4"></div>
<div class="a" style="left:886px;top:78px;width:137px;height:1px;background:#f4f4f4"></div>
<div class="a" style="left:886px;top:78px;width:1px;height:34px;background:#f4f4f4"></div>
<div class="a" style="left:886px;top:110px;width:137px;height:2px;background:#8e8e8e"></div>
<div class="a" style="left:1021px;top:78px;width:2px;height:34px;background:#8e8e8e"></div>
<div class="s" style="left:887px;top:88px;width:135px;text-align:center;color:#000;font-size:12px;letter-spacing:0.5px;word-spacing:1.5px">[ 1-2 ]...</div>
<div class="a" style="left:886px;top:113px;width:137px;height:34px;background:#b4b4b4"></div>
<div class="a" style="left:886px;top:113px;width:137px;height:1px;background:#f4f4f4"></div>
<div class="a" style="left:886px;top:113px;width:1px;height:34px;background:#f4f4f4"></div>
<div class="a" style="left:886px;top:145px;width:137px;height:2px;background:#8e8e8e"></div>
<div class="a" style="left:1021px;top:113px;width:2px;height:34px;background:#8e8e8e"></div>
<div class="s" style="left:887px;top:123px;width:135px;text-align:center;color:#000;font-size:12px;letter-spacing:0.5px;word-spacing:1.5px">[ 1-3 ]...</div>
<div class="a" style="left:886px;top:148px;width:137px;height:34px;background:#b4b4b4"></div>
<div class="a" style="left:886px;top:148px;width:137px;height:1px;background:#f4f4f4"></div>
<div class="a" style="left:886px;top:148px;width:1px;height:34px;background:#f4f4f4"></div>
<div class="a" style="left:886px;top:180px;width:137px;height:2px;background:#8e8e8e"></div>
<div class="a" style="left:1021px;top:148px;width:2px;height:34px;background:#8e8e8e"></div>
<div class="s" style="left:887px;top:158px;width:135px;text-align:center;color:#000;font-size:12px;letter-spacing:0.5px;word-spacing:1.5px">[ 1-4 ]...</div>
<div class="a" style="left:886px;top:183px;width:137px;height:34px;background:#b4b4b4"></div>
<div class="a" style="left:886px;top:183px;width:137px;height:1px;background:#f4f4f4"></div>
<div class="a" style="left:886px;top:183px;width:1px;height:34px;background:#f4f4f4"></div>
<div class="a" style="left:886px;top:215px;width:137px;height:2px;background:#8e8e8e"></div>
<div class="a" style="left:1021px;top:183px;width:2px;height:34px;background:#8e8e8e"></div>
<div class="s" style="left:887px;top:193px;width:135px;text-align:center;color:#000;font-size:12px;letter-spacing:0.5px;word-spacing:1.5px">[ 2-3 ]...</div>
<div class="a" style="left:886px;top:218px;width:137px;height:34px;background:#b4b4b4"></div>
<div class="a" style="left:886px;top:218px;width:137px;height:1px;background:#f4f4f4"></div>
<div class="a" style="left:886px;top:218px;width:1px;height:34px;background:#f4f4f4"></div>
<div class="a" style="left:886px;top:250px;width:137px;height:2px;background:#8e8e8e"></div>
<div class="a" style="left:1021px;top:218px;width:2px;height:34px;background:#8e8e8e"></div>
<div class="s" style="left:887px;top:228px;width:135px;text-align:center;color:#000;font-size:12px;letter-spacing:0.5px;word-spacing:1.5px">[ 2-4 ]...</div>
<div class="a" style="left:886px;top:253px;width:137px;height:32px;background:#4c4c4c"></div>
<div class="a" style="left:886px;top:253px;width:137px;height:1px;background:#8a8a8a"></div>
<div class="a" style="left:886px;top:253px;width:1px;height:32px;background:#8a8a8a"></div>
<div class="a" style="left:886px;top:283px;width:137px;height:2px;background:#2a2a2a"></div>
<div class="a" style="left:1021px;top:253px;width:2px;height:32px;background:#2a2a2a"></div>
<div class="s" style="left:887px;top:263px;width:135px;text-align:center;color:#fff;font-size:12px;letter-spacing:0.5px;word-spacing:1.5px">[ 3-4 ]...</div>
<div class="a" style="left:886px;top:286px;width:137px;height:1px;background:#9090c8"></div>
<div class="a" style="left:886px;top:287px;width:137px;height:2px;background:#000040"></div>
<div class="a" style="left:886px;top:290px;width:137px;height:32px;background:#b4b4b4"></div>
<div class="a" style="left:886px;top:290px;width:137px;height:1px;background:#f4f4f4"></div>
<div class="a" style="left:886px;top:290px;width:1px;height:32px;background:#f4f4f4"></div>
<div class="a" style="left:886px;top:320px;width:137px;height:2px;background:#8e8e8e"></div>
<div class="a" style="left:1021px;top:290px;width:2px;height:32px;background:#8e8e8e"></div>
<div class="s" style="left:887px;top:299px;width:135px;text-align:center;color:#000;font-size:12px;letter-spacing:0.3px">Return</div>
<div class="a" style="left:0px;top:704px;width:1024px;height:1px;background:#000"></div>
<div class="a" style="left:0px;top:705px;width:1024px;height:1px;background:#6a6a6a"></div>
<div class="a" style="left:0px;top:706px;width:1024px;height:19px;background:#4a4a4a"></div>
<div class="a" style="left:0px;top:706px;width:2px;height:19px;background:#8a8a8a"></div>
<div class="a" style="left:0px;top:725px;width:1024px;height:3px;background:#141414"></div>
<div class="a" style="left:704px;top:707px;width:48px;height:18px;background:#3c3c8c;border-top:1px solid #2a2a2a;border-left:1px solid #2a2a2a;border-bottom:1px solid #7a7a7a;border-right:1px solid #7a7a7a"></div>
<div class="s" style="left:711px;top:707px;color:#fff;font-size:16px;line-height:20px;letter-spacing:0px">Hold</div>
<div class="a" style="left:753px;top:707px;width:39px;height:18px;background:#404040;border-top:1px solid #2a2a2a;border-left:1px solid #2a2a2a;border-bottom:1px solid #7a7a7a;border-right:1px solid #7a7a7a"></div>
<div class="s" style="left:757px;top:707px;color:#8a8a8a;font-size:16px;line-height:20px;letter-spacing:0px">Stop</div>
<div class="a" style="left:794px;top:707px;width:52px;height:18px;background:#404040;border-top:1px solid #2a2a2a;border-left:1px solid #2a2a2a;border-bottom:1px solid #7a7a7a;border-right:1px solid #7a7a7a"></div>
<div class="s" style="left:798px;top:707px;color:#8a8a8a;font-size:16px;line-height:20px;letter-spacing:-0.4px">ExtRef</div>
<div class="a" style="left:848px;top:707px;width:31px;height:18px;background:#404040;border-top:1px solid #2a2a2a;border-left:1px solid #2a2a2a;border-bottom:1px solid #7a7a7a;border-right:1px solid #7a7a7a"></div>
<div class="s" style="left:851px;top:707px;color:#8a8a8a;font-size:16px;line-height:20px;letter-spacing:0px">Svc</div>
<div class="a" style="left:881px;top:707px;width:139px;height:18px;background:#404040;border-top:1px solid #2a2a2a;border-left:1px solid #2a2a2a;border-bottom:1px solid #7a7a7a;border-right:1px solid #7a7a7a"></div>
<div class="s" style="left:885px;top:707px;color:#fff;font-size:16px;line-height:20px;letter-spacing:0.4px">2022-01-14 09:26</div>
</body></html>
